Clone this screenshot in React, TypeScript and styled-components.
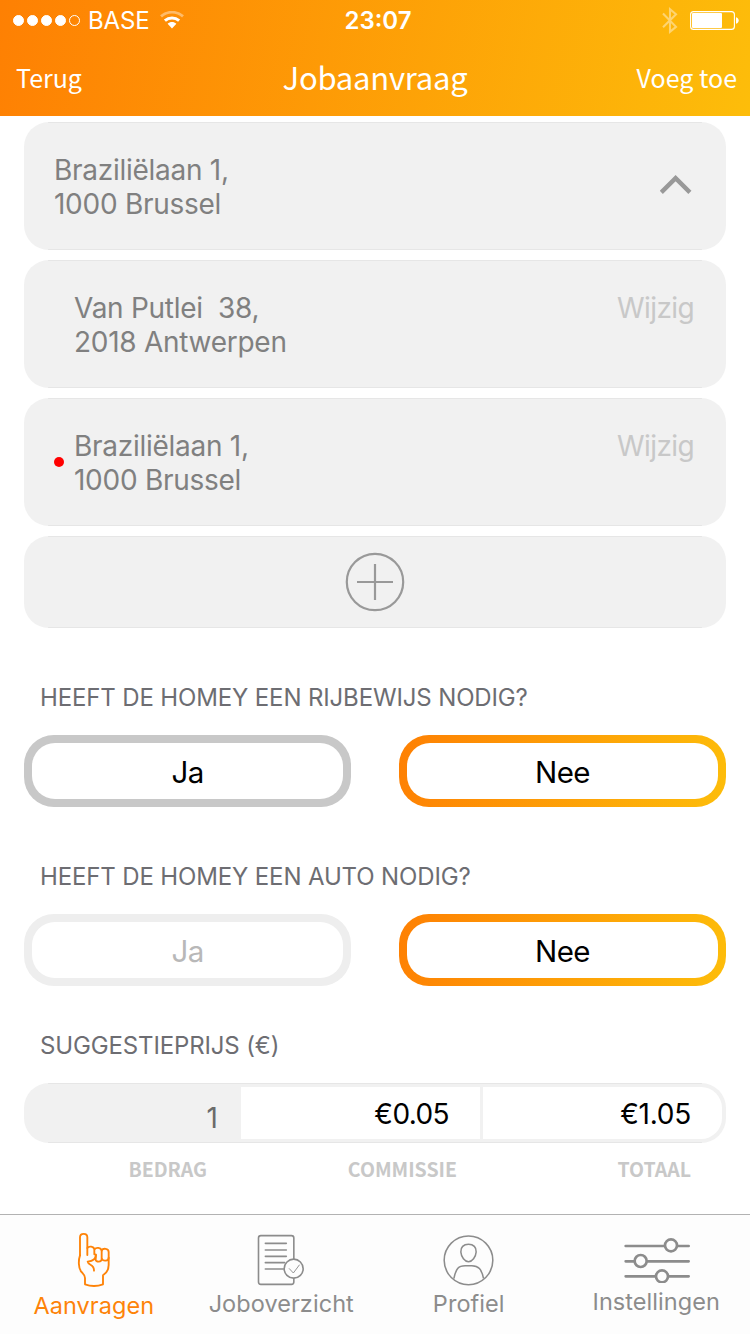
import React from "react";
import styled, { createGlobalStyle } from "styled-components";

const GlobalStyle = createGlobalStyle`
  * { box-sizing: border-box; }
  body { margin: 0; background: #fff; }
`;

const sans = `Inter, "Liberation Sans", sans-serif`;
const brand = `"Noto Sans CJK SC", "Open Sans", sans-serif`;
const sunrise = "linear-gradient(100deg, #fe8003 0%, #fdbd0a 100%)";

const Screen = styled.div`
  width: 750px;
  height: 1334px;
  display: flex;
  flex-direction: column;
  overflow: hidden;
  background: #fff;
  font-family: ${sans};
`;

const Header = styled.header`
  height: 116px;
  flex: none;
  color: #fff;
  background: ${sunrise};
`;

const StatusBar = styled.div`
  height: 40px;
  display: grid;
  grid-template-columns: 1fr auto 1fr;
  align-items: center;
  padding: 0 11px 0 13px;
  font-size: 24px;
  line-height: 38px;
`;

const Carrier = styled.div`
  display: flex;
  align-items: center;
`;

const Dots = styled.div`
  display: flex;
  gap: 3px;
  margin-right: 8px;
`;

const Dot = styled.i<{ $empty?: boolean }>`
  width: 11px;
  height: 11px;
  border-radius: 50%;
  border: 1px solid #fff;
  background: ${(p) => (p.$empty ? "transparent" : "#fff")};
`;

const CarrierName = styled.span`
  padding-top: 2px;
  letter-spacing: -0.1px;
  margin-right: 10px;
`;

const Clock = styled.time`
  padding: 2px 0 0 4px;
  font-weight: 600;
`;

const StatusRight = styled.div`
  display: flex;
  justify-content: flex-end;
  align-items: center;
  gap: 12px;
`;

const NavBar = styled.div`
  height: 76px;
  display: grid;
  grid-template-columns: 1fr auto 1fr;
  align-items: start;
  padding: 0 13px 0 16px;
  font-family: ${brand};
`;

const NavLink = styled.a<{ $end?: boolean }>`
  font-size: 25px;
  line-height: 75px;
  text-align: ${(p) => (p.$end ? "right" : "left")};
`;

const Title = styled.h1`
  margin: 0 3px 0 0;
  font-size: 31px;
  font-weight: 400;
  line-height: 73px;
  letter-spacing: -0.25px;
`;

const Content = styled.main`
  flex: 1;
  padding: 6px 24px 0;
`;

const hairlines = `
  background:
    linear-gradient(#e6e6e6, #e6e6e6) 24px 0 / calc(100% - 48px) 1px no-repeat,
    linear-gradient(#e6e6e6, #e6e6e6) 24px 100% / calc(100% - 48px) 1px no-repeat,
    #f1f1f1;
`;

const CardList = styled.div`
  display: flex;
  flex-direction: column;
  gap: 10px;
`;

const Card = styled.section`
  height: 128px;
  display: flex;
  justify-content: space-between;
  padding: 31px 32px 0 30px;
  border-radius: 25px;
  ${hairlines}
  font-size: 28px;
  line-height: 34px;
  color: #808080;
`;

const AddCard = styled.button`
  height: 92px;
  display: flex;
  justify-content: center;
  align-items: center;
  padding: 0;
  border: 0;
  border-radius: 25px;
  ${hairlines}
`;

const Address = styled.div`
  flex: 1;
  white-space: pre;
  letter-spacing: -0.27px;
`;

const MarkerSlot = styled.div`
  width: 20px;
  padding-top: 28px;
`;

const Marker = styled.div`
  width: 10px;
  height: 10px;
  border-radius: 50%;
  background: #f00;
`;

const Edit = styled.a`
  color: #c8c8c8;
  letter-spacing: -0.6px;
`;

const ChevronSlot = styled.div`
  padding: 22px 2px 0 0;
  line-height: 0;
`;

const Question = styled.h2<{ $top: number }>`
  margin: ${(p) => p.$top}px 0 22px 16px;
  font-size: 24px;
  font-weight: 400;
  line-height: 30px;
  letter-spacing: -0.14px;
  color: #6d6d72;
`;

const Choices = styled.div`
  display: grid;
  grid-template-columns: 1fr 1fr;
  gap: 48px;
`;

const frames = { grey: "#c8c8c8", faint: "#eeeeee", active: sunrise };

const Choice = styled.button<{ $frame: keyof typeof frames }>`
  height: 72px;
  padding: 8px;
  border: 0;
  border-radius: 30px;
  background: ${(p) => frames[p.$frame]};
  color: ${(p) => (p.$frame === "faint" ? "#b8b8b8" : "#000")};
  font-family: ${sans};
  font-size: 29.5px;
  letter-spacing: -0.6px;
`;

const ChoiceFace = styled.span`
  display: block;
  height: 56px;
  border-radius: 23px;
  background: #fff;
  line-height: 58px;
`;

const PriceRow = styled.div`
  height: 60px;
  display: grid;
  grid-template: 52px / 213px 239px 239px;
  column-gap: 3px;
  padding: 4px 4px 4px 1px;
  border-radius: 25px;
  ${hairlines}
  font-size: 28px;
  text-align: right;
`;

const Amount = styled.div`
  padding-right: 20px;
  line-height: 62px;
  color: #6b6b6b;
`;

const Price = styled.div<{ $last?: boolean }>`
  padding-right: 31px;
  border-radius: ${(p) => (p.$last ? "0 21px 21px 0" : "0")};
  background: #fff;
  line-height: 54px;
  letter-spacing: ${(p) => (p.$last ? -0.25 : -0.6)}px;
`;

const PriceLabels = styled.div`
  display: grid;
  grid-template-columns: 183px 250px 234px;
  margin-top: 10px;
  font-family: ${brand};
  font-size: 19.5px;
  font-weight: 700;
  line-height: 32px;
  text-align: right;
  color: #c8c8c8;
`;

const TabBar = styled.nav`
  height: 120px;
  flex: none;
  display: grid;
  grid-template-columns: repeat(4, 1fr);
  border-top: 1px solid #b2b2b2;
  background: #fdfdfd;
`;

const Tab = styled.a<{ $active?: boolean }>`
  display: flex;
  flex-direction: column;
  align-items: center;
  color: ${(p) => (p.$active ? "#fe8308" : "#8c8c8c")};
  font-size: 23.5px;
  line-height: 30px;
  letter-spacing: 0.06px;
`;

const IconSlot = styled.div<{ $height: number; $gap: number; $nudge: number }>`
  height: ${(p) => p.$height}px;
  padding-bottom: ${(p) => p.$gap}px;
  margin-left: ${(p) => p.$nudge}px;
  display: flex;
  align-items: flex-end;
`;

const WifiIcon = () => (
  <svg width="24" height="18" viewBox="0 0 24 18" fill="none" stroke="#fff" strokeWidth="3">
    <path d="M1 5.4C7.2-.2 16.8-.2 23 5.4" strokeOpacity=".4" strokeWidth="2.8" />
    <path d="M4.9 9.6c4.1-3.6 10.1-3.6 14.2 0" />
    <path d="M7.6 12.7c2.5-2.3 6.3-2.3 8.8 0L12 17.6z" fill="#fff" stroke="none" />
  </svg>
);

const BluetoothIcon = () => (
  <svg width="16" height="27" viewBox="0 0 16 27" fill="none" stroke="#fff" strokeOpacity=".42" strokeWidth="2.1">
    <path d="M1 6.5l13 13.3-6 5V2.2l6 5L1 20.3" />
  </svg>
);

const BatteryIcon = () => (
  <svg width="49" height="19" viewBox="0 0 49 19">
    <rect x=".6" y=".6" width="43.8" height="17.8" rx="3" fill="none" stroke="#fff" strokeWidth="1.1" />
    <rect x="2" y="2" width="30" height="15" rx="1" fill="#fff" />
    <path d="M46 6.2c3.6.6 3.6 6 0 6.6z" fill="#fff" />
  </svg>
);

const ChevronUp = () => (
  <svg width="32" height="20" viewBox="0 0 32 20" fill="none" stroke="#999" strokeWidth="4.4">
    <path d="M1.3 17.4L15.6 3.2l14.3 14.2" />
  </svg>
);

const PlusCircle = () => (
  <svg width="60" height="60" viewBox="0 0 60 60" fill="none" stroke="#999" strokeWidth="2.2">
    <circle cx="30" cy="30" r="28.2" />
    <path d="M12 30h36M30 12v36" />
  </svg>
);

const PointingHand = () => (
  <svg width="36" height="57" viewBox="228 78 108 171" fill="none" stroke="currentColor" strokeWidth="5.6" strokeLinejoin="round" strokeLinecap="round">
    <path d="M240 151V97c0-14 22-14 22 0v53" />
    <path d="M240 151c-5 14-5 37 3 48 6 7 12 10 12 20v19c16 6 38 6 54 0v-27c11-7 17-16 17-31v-39c0-11-17-13-21-4v26c0 9-18 9-18 1v-16" />
    <path d="M262 129c5-7 19-5 21 4v15M284 133c4-7 19-6 21 4M326 158c0 11-17 11-20 4" />
    <path d="M288 150c0 13-8 18-25 20 2 12 20 7 19 27" />
  </svg>
);

const ChecklistIcon = () => (
  <svg width="49" height="52" viewBox="769 88 147 156" fill="none" stroke="currentColor" strokeWidth="4.8" strokeLinecap="round">
    <rect x="776.5" y="93" width="106" height="146" rx="7" />
    <path d="M797 116h63M797 136h63M797 155h63M797 174h58M797 193h54" />
    <circle cx="882" cy="192" r="28.5" fill="#fdfdfd" />
    <path d="M869 192l12 13 18-24" strokeWidth="2.8" />
  </svg>
);

const ProfileIcon = () => (
  <svg width="51" height="51" viewBox="205.5 90 153 153" fill="none" stroke="currentColor" strokeWidth="4.6">
    <circle cx="282" cy="166" r="73" />
    <path d="M282 118c-15 0-24 9-23 23 1 15 12 29 23 29s22-14 23-29c1-14-8-23-23-23z" />
    <path d="M238 221c7-32 14-39 34-39h20c20 0 29 10 35 38" />
  </svg>
);

const SlidersIcon = () => (
  <svg width="67" height="46" viewBox="746 96 201 138" fill="none" stroke="currentColor" strokeWidth="8" strokeLinecap="round">
    <path d="M751 123h189M751 169h189M751 214h189" />
    <g fill="#fdfdfd">
      <circle cx="887" cy="121" r="18" />
      <circle cx="796" cy="168" r="18" />
      <circle cx="860" cy="214" r="18" />
    </g>
  </svg>
);

const stops = [
  { address: "Van Putlei  38,\n2018 Antwerpen", marked: false },
  { address: "Braziliëlaan 1,\n1000 Brussel", marked: true },
];

const tabs = [
  { label: "Aanvragen", icon: <PointingHand />, height: 76, gap: 3, nudge: 0, active: true },
  { label: "Joboverzicht", icon: <ChecklistIcon />, height: 74, gap: 3, nudge: -1 },
  { label: "Profiel", icon: <ProfileIcon />, height: 74, gap: 3, nudge: 0 },
  { label: "Instellingen", icon: <SlidersIcon />, height: 72, gap: 4, nudge: 2 },
];

export default function App() {
  return (
    <Screen>
      <GlobalStyle />
      <Header>
        <StatusBar>
          <Carrier>
            <Dots>
              <Dot /><Dot /><Dot /><Dot /><Dot $empty />
            </Dots>
            <CarrierName>BASE</CarrierName>
            <WifiIcon />
          </Carrier>
          <Clock>23:07</Clock>
          <StatusRight>
            <BluetoothIcon />
            <BatteryIcon />
          </StatusRight>
        </StatusBar>
        <NavBar>
          <NavLink>Terug</NavLink>
          <Title>Jobaanvraag</Title>
          <NavLink $end>Voeg toe</NavLink>
        </NavBar>
      </Header>

      <Content>
        <CardList>
          <Card>
            <Address>{"Braziliëlaan 1,\n1000 Brussel"}</Address>
            <ChevronSlot><ChevronUp /></ChevronSlot>
          </Card>
          {stops.map((stop) => (
            <Card key={stop.address}>
              <MarkerSlot>{stop.marked && <Marker />}</MarkerSlot>
              <Address>{stop.address}</Address>
              <Edit>Wijzig</Edit>
            </Card>
          ))}
          <AddCard><PlusCircle /></AddCard>
        </CardList>

        <Question $top={55}>HEEFT DE HOMEY EEN RIJBEWIJS NODIG?</Question>
        <Choices>
          <Choice $frame="grey"><ChoiceFace>Ja</ChoiceFace></Choice>
          <Choice $frame="active"><ChoiceFace>Nee</ChoiceFace></Choice>
        </Choices>

        <Question $top={55}>HEEFT DE HOMEY EEN AUTO NODIG?</Question>
        <Choices>
          <Choice $frame="faint"><ChoiceFace>Ja</ChoiceFace></Choice>
          <Choice $frame="active"><ChoiceFace>Nee</ChoiceFace></Choice>
        </Choices>

        <Question $top={45}>SUGGESTIEPRIJS (€)</Question>
        <PriceRow>
          <Amount>1</Amount>
          <Price>€0.05</Price>
          <Price $last>€1.05</Price>
        </PriceRow>
        <PriceLabels>
          <span>BEDRAG</span>
          <span>COMMISSIE</span>
          <span>TOTAAL</span>
        </PriceLabels>
      </Content>

      <TabBar>
        {tabs.map((tab) => (
          <Tab key={tab.label} $active={tab.active}>
            <IconSlot $height={tab.height} $gap={tab.gap} $nudge={tab.nudge}>
              {tab.icon}
            </IconSlot>
            {tab.label}
          </Tab>
        ))}
      </TabBar>
    </Screen>
  );
}
